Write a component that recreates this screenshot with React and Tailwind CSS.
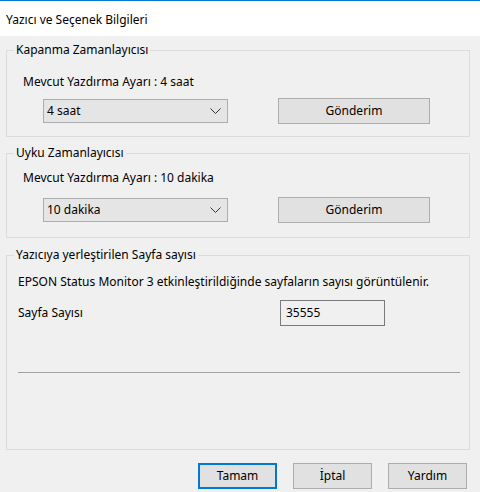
import { useState } from 'react'

const font = { fontFamily: '"Noto Sans", "Liberation Sans", sans-serif' }

const Chevron = () => (
  <svg width="11" height="6" viewBox="0 0 11 6" fill="none">
    <polyline points="0.5,0.5 5.5,5.5 10.5,0.5" stroke="#333" strokeWidth="1" />
  </svg>
)

const WinButton = ({ children, primary, className = '' }) => (
  <button
    className={`h-[26px] bg-[#e1e1e1] text-[12px] text-black leading-none ${
      primary ? 'border-2 border-[#0078d7]' : 'border border-[#adadad]'
    } ${className}`}
  >
    {children}
  </button>
)

const Select = ({ value }) => (
  <div className="w-[185px] h-[24px] bg-[#e5e5e5] border border-[#adadad] flex items-center justify-between pl-[3px] pr-[6px]">
    <span className="text-[12px]">{value}</span>
    <Chevron />
  </div>
)

const Group = ({ title, children, className = '' }) => (
  <fieldset className={`border border-[#dcdcdc] mx-0 ${className}`}>
    <legend className="ml-[7px] px-[2px] text-[12px] leading-[16px]">{title}</legend>
    {children}
  </fieldset>
)

export default function App() {
  const [pages] = useState('35555')

  return (
    <div style={font} className="w-[480px] h-[492px] bg-[#f0f0f0] text-black text-[12px] flex flex-col overflow-hidden">
      <div className="h-[36px] bg-white border-t border-[#0078d7] flex items-center pl-[6px] pt-[2px] shrink-0">
        <span className="text-[12px]">Yazıcı ve Seçenek Bilgileri</span>
      </div>

      <div className="flex flex-col pl-[6px] pr-[10px]">
        <Group title="Kapanma Zamanlayıcısı" className="mt-[6px] pb-[12px]">
          <div className="pl-[16px] mt-[16px] leading-[16px]">Mevcut Yazdırma Ayarı : 4 saat</div>
          <div className="flex items-center mt-[8px] pl-[36px]">
            <Select value="4 saat" />
            <WinButton className="w-[152px] ml-[50px]">Gönderim</WinButton>
          </div>
        </Group>

        <Group title="Uyku Zamanlayıcısı" className="mt-[8px] pb-[14px]">
          <div className="pl-[16px] mt-[9px] leading-[16px]">Mevcut Yazdırma Ayarı : 10 dakika</div>
          <div className="flex items-center mt-[11px] pl-[36px]">
            <Select value="10 dakika" />
            <WinButton className="w-[152px] ml-[50px]">Gönderim</WinButton>
          </div>
        </Group>

        <Group title="Yazıcıya yerleştirilen Sayfa sayısı" className="mt-[9px] pb-[76px]">
          <div className="pl-[11px] mt-[11px] leading-[16px]">
            EPSON Status Monitor 3 etkinleştirildiğinde sayfaların sayısı görüntülenir.
          </div>
          <div className="flex items-center mt-[10px] pl-[11px]">
            <span className="w-[262px] leading-[16px]">Sayfa Sayısı</span>
            <div className="w-[105px] h-[26px] border border-[#7a7a7a] flex items-center pl-[5px]">{pages}</div>
          </div>
          <div className="ml-[11px] mr-[9px] mt-[46px] border-t border-[#a0a0a0]" />
        </Group>

        <div className="flex justify-end gap-[16px] mt-[13px] pr-[3px]">
          <WinButton primary className="w-[79px]">Tamam</WinButton>
          <WinButton className="w-[79px]">İptal</WinButton>
          <WinButton className="w-[79px]">Yardım</WinButton>
        </div>
      </div>
    </div>
  )
}
